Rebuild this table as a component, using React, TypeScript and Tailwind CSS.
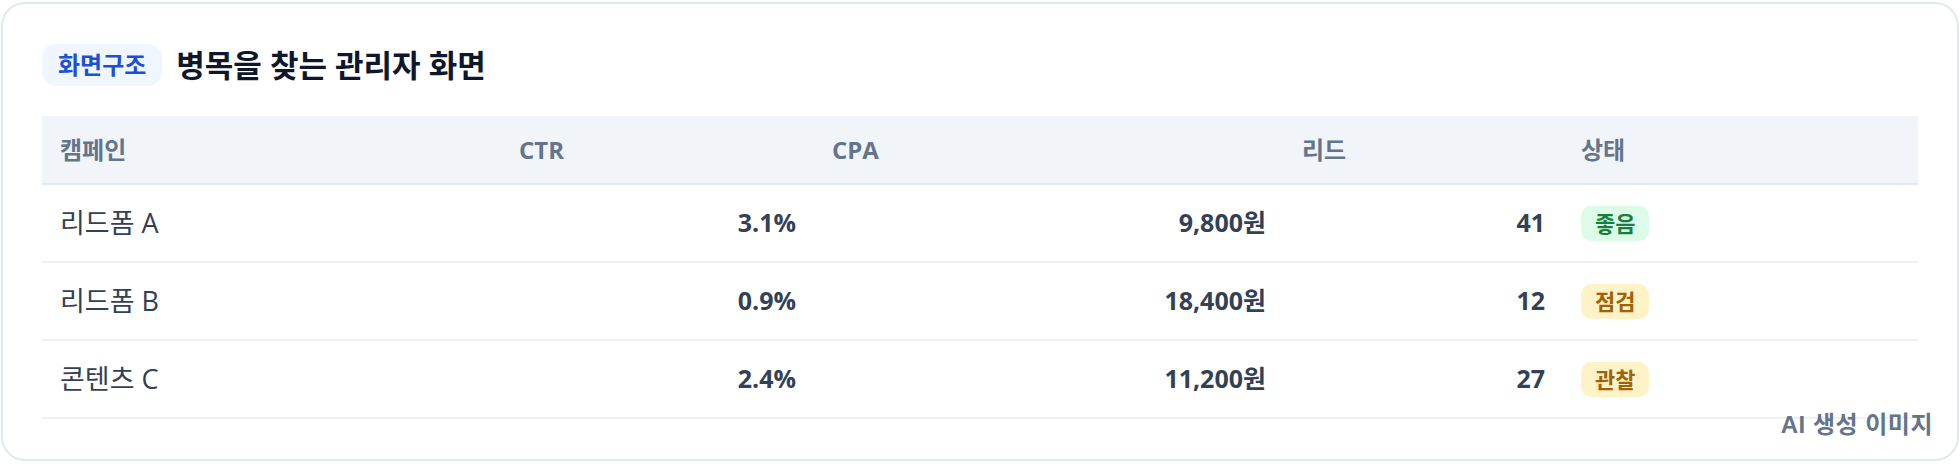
import React from "react";

type Row = {
  name: string;
  ctr: string;
  cpa: string;
  leads: string;
  status: string;
  tone: "good" | "warn";
};

const rows: Row[] = [
  { name: "리드폼 A", ctr: "3.1%", cpa: "9,800원", leads: "41", status: "좋음", tone: "good" },
  { name: "리드폼 B", ctr: "0.9%", cpa: "18,400원", leads: "12", status: "점검", tone: "warn" },
  { name: "콘텐츠 C", ctr: "2.4%", cpa: "11,200원", leads: "27", status: "관찰", tone: "warn" },
];

const cols = "grid grid-cols-[459px_313px_470px_279px_1fr]";

export default function App() {
  return (
    <div className="w-[1960px] h-[464px] bg-white pt-[2px] pl-px pr-px pb-[3px] font-['Open_Sans','Noto_Sans_CJK_KR',sans-serif]">
      <div className="relative h-full w-[1958px] rounded-[24px] border-2 border-[#e2e8f0] bg-white px-[39px] pt-[40px]">
        <div className="flex items-center gap-[14px]">
          <span className="flex h-[42px] items-center rounded-[14px] bg-[#eff6ff] px-[16px] text-[24px] font-semibold text-[#1d4ed8]">
            화면구조
          </span>
          <h1 className="text-[31px] font-bold text-[#0f172a] leading-none">병목을 찾는 관리자 화면</h1>
        </div>

        <div className="mt-[30px]">
          <div className={`${cols} h-[69px] items-center border-b-2 border-[#e2e8f0] bg-[#f1f5f9] text-[24px] font-bold text-[#64748b]`}>
            <div className="px-[18px]">캠페인</div>
            <div className="px-[18px]">CTR</div>
            <div className="px-[18px]">CPA</div>
            <div className="px-[18px]">리드</div>
            <div className="px-[18px]">상태</div>
          </div>
          {rows.map((r) => (
            <div
              key={r.name}
              className={`${cols} h-[78px] items-center border-b-2 border-[#eef2f6] text-[25px] text-[#334155]`}
            >
              <div className="px-[18px] text-[27px]">{r.name}</div>
              <div className="px-[18px] text-right font-bold">{r.ctr}</div>
              <div className="px-[18px] text-right font-bold">{r.cpa}</div>
              <div className="px-[18px] text-right font-bold">{r.leads}</div>
              <div className="px-[18px]">
                <span
                  className={
                    r.tone === "good"
                      ? "inline-flex h-[35px] items-center rounded-[10px] bg-[#dcfce7] px-[14px] text-[22px] font-bold text-[#15803d]"
                      : "inline-flex h-[35px] items-center rounded-[10px] bg-[#fef3c7] px-[14px] text-[22px] font-bold text-[#a16207]"
                  }
                >
                  {r.status}
                </span>
              </div>
            </div>
          ))}
        </div>

        <div className="absolute right-[24px] bottom-[16px] text-[24px] font-bold tracking-[0.5px] text-[#64748b] font-['Liberation_Sans','Noto_Sans_CJK_KR',sans-serif]">
          AI 생성 이미지
        </div>
      </div>
    </div>
  );
}
